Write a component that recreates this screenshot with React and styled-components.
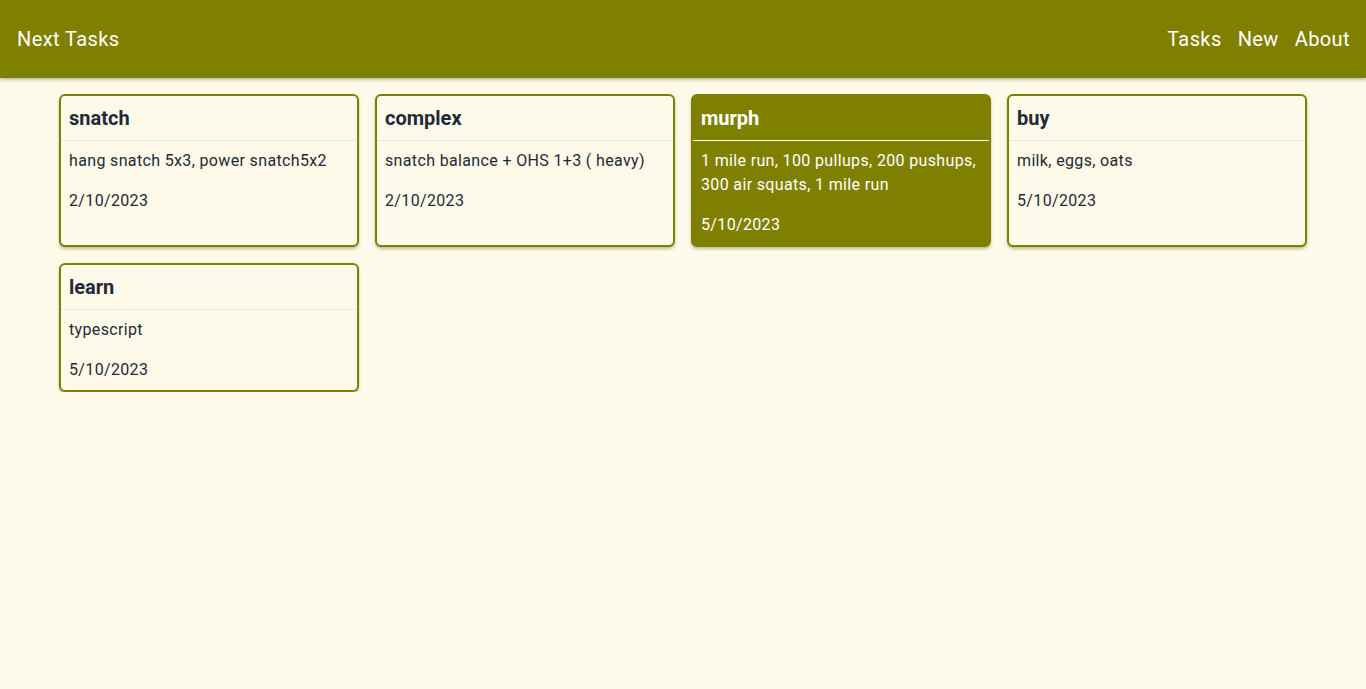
import styled, { createGlobalStyle } from "styled-components";

const GlobalStyle = createGlobalStyle`
    body {
        margin: 0;
        background: #fefae9;
        font-family: Roboto, "Liberation Sans", sans-serif;
        color: #1f2937;
    }
`

const Header = styled.header`
    height: 78px;
    background: #808000;
    display: flex;
    align-items: center;
    justify-content: space-between;
    padding: 0 16px 0 17px;
    box-shadow: 0 2px 3px rgba(0, 0, 0, 0.25);
    color: #ffffff;
    font-size: 20px;
    letter-spacing: 0.4px;
`

const Brand = styled.a`
    color: inherit;
    text-decoration: none;
`

const Nav = styled.nav`
    display: flex;
    gap: 16px;
`

const NavLink = styled.a`
    color: inherit;
    text-decoration: none;
`

const Grid = styled.main`
    width: 1248px;
    margin: 16px auto 0;
    display: grid;
    grid-template-columns: repeat(4, 300px);
    gap: 16px;
`

const Card = styled.div`
    border: 2px solid #808000;
    border-radius: 6px;
    background: ${(p) => (p.$active ? "#808000" : "#fefae9")};
    color: ${(p) => (p.$active ? "#ffffff" : "#1f2937")};
    box-shadow: 0 2px 3px rgba(80, 80, 0, 0.35);
    display: flex;
    flex-direction: column;
`

const CardTitle = styled.h2`
    margin: 0;
    font-size: 20px;
    font-weight: 700;
    line-height: 28px;
    padding: 8px;
    border-bottom: 1px solid ${(p) => (p.$active ? "#ffffff" : "#e5e7eb")};
`

const CardBody = styled.div`
    padding: 8px;
    font-size: 16px;
    letter-spacing: 0.35px;
    line-height: 24px;
    display: flex;
    flex-direction: column;
    gap: 16px;
`

const Text = styled.p`
    margin: 0;
`

const tasks = [
    { id: 1, title: "snatch", text: "hang snatch 5x3, power snatch5x2", date: "2/10/2023" },
    { id: 2, title: "complex", text: "snatch balance + OHS 1+3 ( heavy)", date: "2/10/2023" },
    { id: 3, title: "murph", text: "1 mile run, 100 pullups, 200 pushups, 300 air squats, 1 mile run", date: "5/10/2023", active: true },
    { id: 4, title: "buy", text: "milk, eggs, oats", date: "5/10/2023" },
    { id: 5, title: "learn", text: "typescript", date: "5/10/2023" },
]

const App = () => {
    return (
        <>
            <GlobalStyle />
            <Header>
                <Brand href="#">Next Tasks</Brand>
                <Nav>
                    <NavLink href="#">Tasks</NavLink>
                    <NavLink href="#">New</NavLink>
                    <NavLink href="#">About</NavLink>
                </Nav>
            </Header>
            <Grid>
                {tasks.map((task) => (
                    <Card key={task.id} $active={task.active}>
                        <CardTitle $active={task.active}>{task.title}</CardTitle>
                        <CardBody>
                            <Text>{task.text}</Text>
                            <Text>{task.date}</Text>
                        </CardBody>
                    </Card>
                ))}
            </Grid>
        </>
    )
}

export default App;
